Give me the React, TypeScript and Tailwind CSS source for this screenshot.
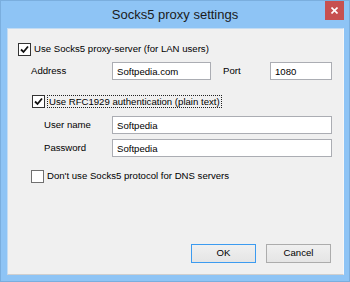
import React, { useState } from 'react';

const font = { fontFamily: '"Liberation Sans", Arial, sans-serif' };

const CheckBox: React.FC<{ checked: boolean; onToggle: () => void }> = ({ checked, onToggle }) => (
  <button
    type="button"
    onClick={onToggle}
    className={`w-[13px] h-[13px] shrink-0 bg-white border flex items-center justify-center p-0 ${
      checked ? 'border-[#333333]' : 'border-[#707070]'
    }`}
  >
    {checked && (
      <svg width="9" height="9" viewBox="0 0 9 9">
        <path d="M1 4.5 L3.5 7 L8 1.5" fill="none" stroke="#111" strokeWidth="1.8" />
      </svg>
    )}
  </button>
);

export default function App() {
  const [useProxy, setUseProxy] = useState(true);
  const [useAuth, setUseAuth] = useState(true);
  const [noDns, setNoDns] = useState(false);
  const [form, setForm] = useState({
    address: 'Softpedia.com',
    port: '1080',
    user: 'Softpedia',
    password: 'Softpedia',
  });

  const inputCls =
    'h-[18px] bg-white border border-[#abadb3] pl-[4px] text-[9.6px] text-black outline-none';

  return (
    <div
      className="w-[350px] h-[282px] bg-[#8ec4f5] border border-[#7aaede] flex flex-col relative text-[9.6px] text-black"
      style={font}
    >
      {/* title bar */}
      <div className="h-[27px] flex items-center justify-center">
        <span className="text-[13px] text-[#1b1b1b] mt-[1px]">Socks5 proxy settings</span>
      </div>
      <div className="absolute top-0 right-[5px] w-[19px] h-[19px] bg-[#c75050] flex items-center justify-center">
        <svg width="7" height="7" viewBox="0 0 7 7">
          <path d="M0.5 0.5 L6.5 6.5 M6.5 0.5 L0.5 6.5" stroke="#fff" strokeWidth="1.6" />
        </svg>
      </div>

      {/* client area */}
      <div className="flex-1 ml-[6px] mr-[5px] mb-[6px] bg-[#f0f0f0] border border-t-[#c3dcf3] border-l-[#c3dcf3] border-r-[#f7f7f7] border-b-[#cfcfcf] flex flex-col">
        <div className="mt-[14px] ml-[10px] flex items-center gap-[3px] h-[13px]">
          <CheckBox checked={useProxy} onToggle={() => setUseProxy(!useProxy)} />
          <span>Use Socks5 proxy-server (for LAN users)</span>
        </div>

        <div className="mt-[6px] flex items-center h-[18px]">
          <span className="ml-[23px] w-[81px]">Address</span>
          <input
            className={`${inputCls} w-[99px]`}
            value={form.address}
            onChange={(e) => setForm({ ...form, address: e.target.value })}
          />
          <span className="ml-[12px] w-[47px]">Port</span>
          <input
            className={`${inputCls} w-[62px]`}
            value={form.port}
            onChange={(e) => setForm({ ...form, port: e.target.value })}
          />
        </div>

        <div className="mt-[15px] ml-[24px] flex items-center gap-[2px] h-[13px]">
          <CheckBox checked={useAuth} onToggle={() => setUseAuth(!useAuth)} />
          <span className="border border-dotted border-[#222] px-[1px] leading-[11px]">
            Use RFC1929 authentication (plain text)
          </span>
        </div>

        <div className="mt-[8px] flex items-center h-[18px]">
          <span className="ml-[36px] w-[68px]">User name</span>
          <input
            className={`${inputCls} w-[220px]`}
            value={form.user}
            onChange={(e) => setForm({ ...form, user: e.target.value })}
          />
        </div>
        <div className="mt-[5px] flex items-center h-[18px]">
          <span className="ml-[36px] w-[68px]">Password</span>
          <input
            className={`${inputCls} w-[220px]`}
            value={form.password}
            onChange={(e) => setForm({ ...form, password: e.target.value })}
          />
        </div>

        <div className="mt-[13px] ml-[23px] flex items-center gap-[3px] h-[13px]">
          <CheckBox checked={noDns} onToggle={() => setNoDns(!noDns)} />
          <span>Don't use Socks5 protocol for DNS servers</span>
        </div>

        <div className="mt-auto mb-[11px] mr-[12px] flex justify-end gap-[10px]">
          <button className="w-[65px] h-[19px] border border-[#3c9bf0] bg-gradient-to-b from-[#f0f0f0] to-[#e5e5e5] text-[9.6px]">
            OK
          </button>
          <button className="w-[65px] h-[19px] border border-[#acacac] bg-gradient-to-b from-[#f0f0f0] to-[#e5e5e5] text-[9.6px]">
            Cancel
          </button>
        </div>
      </div>
    </div>
  );
}
